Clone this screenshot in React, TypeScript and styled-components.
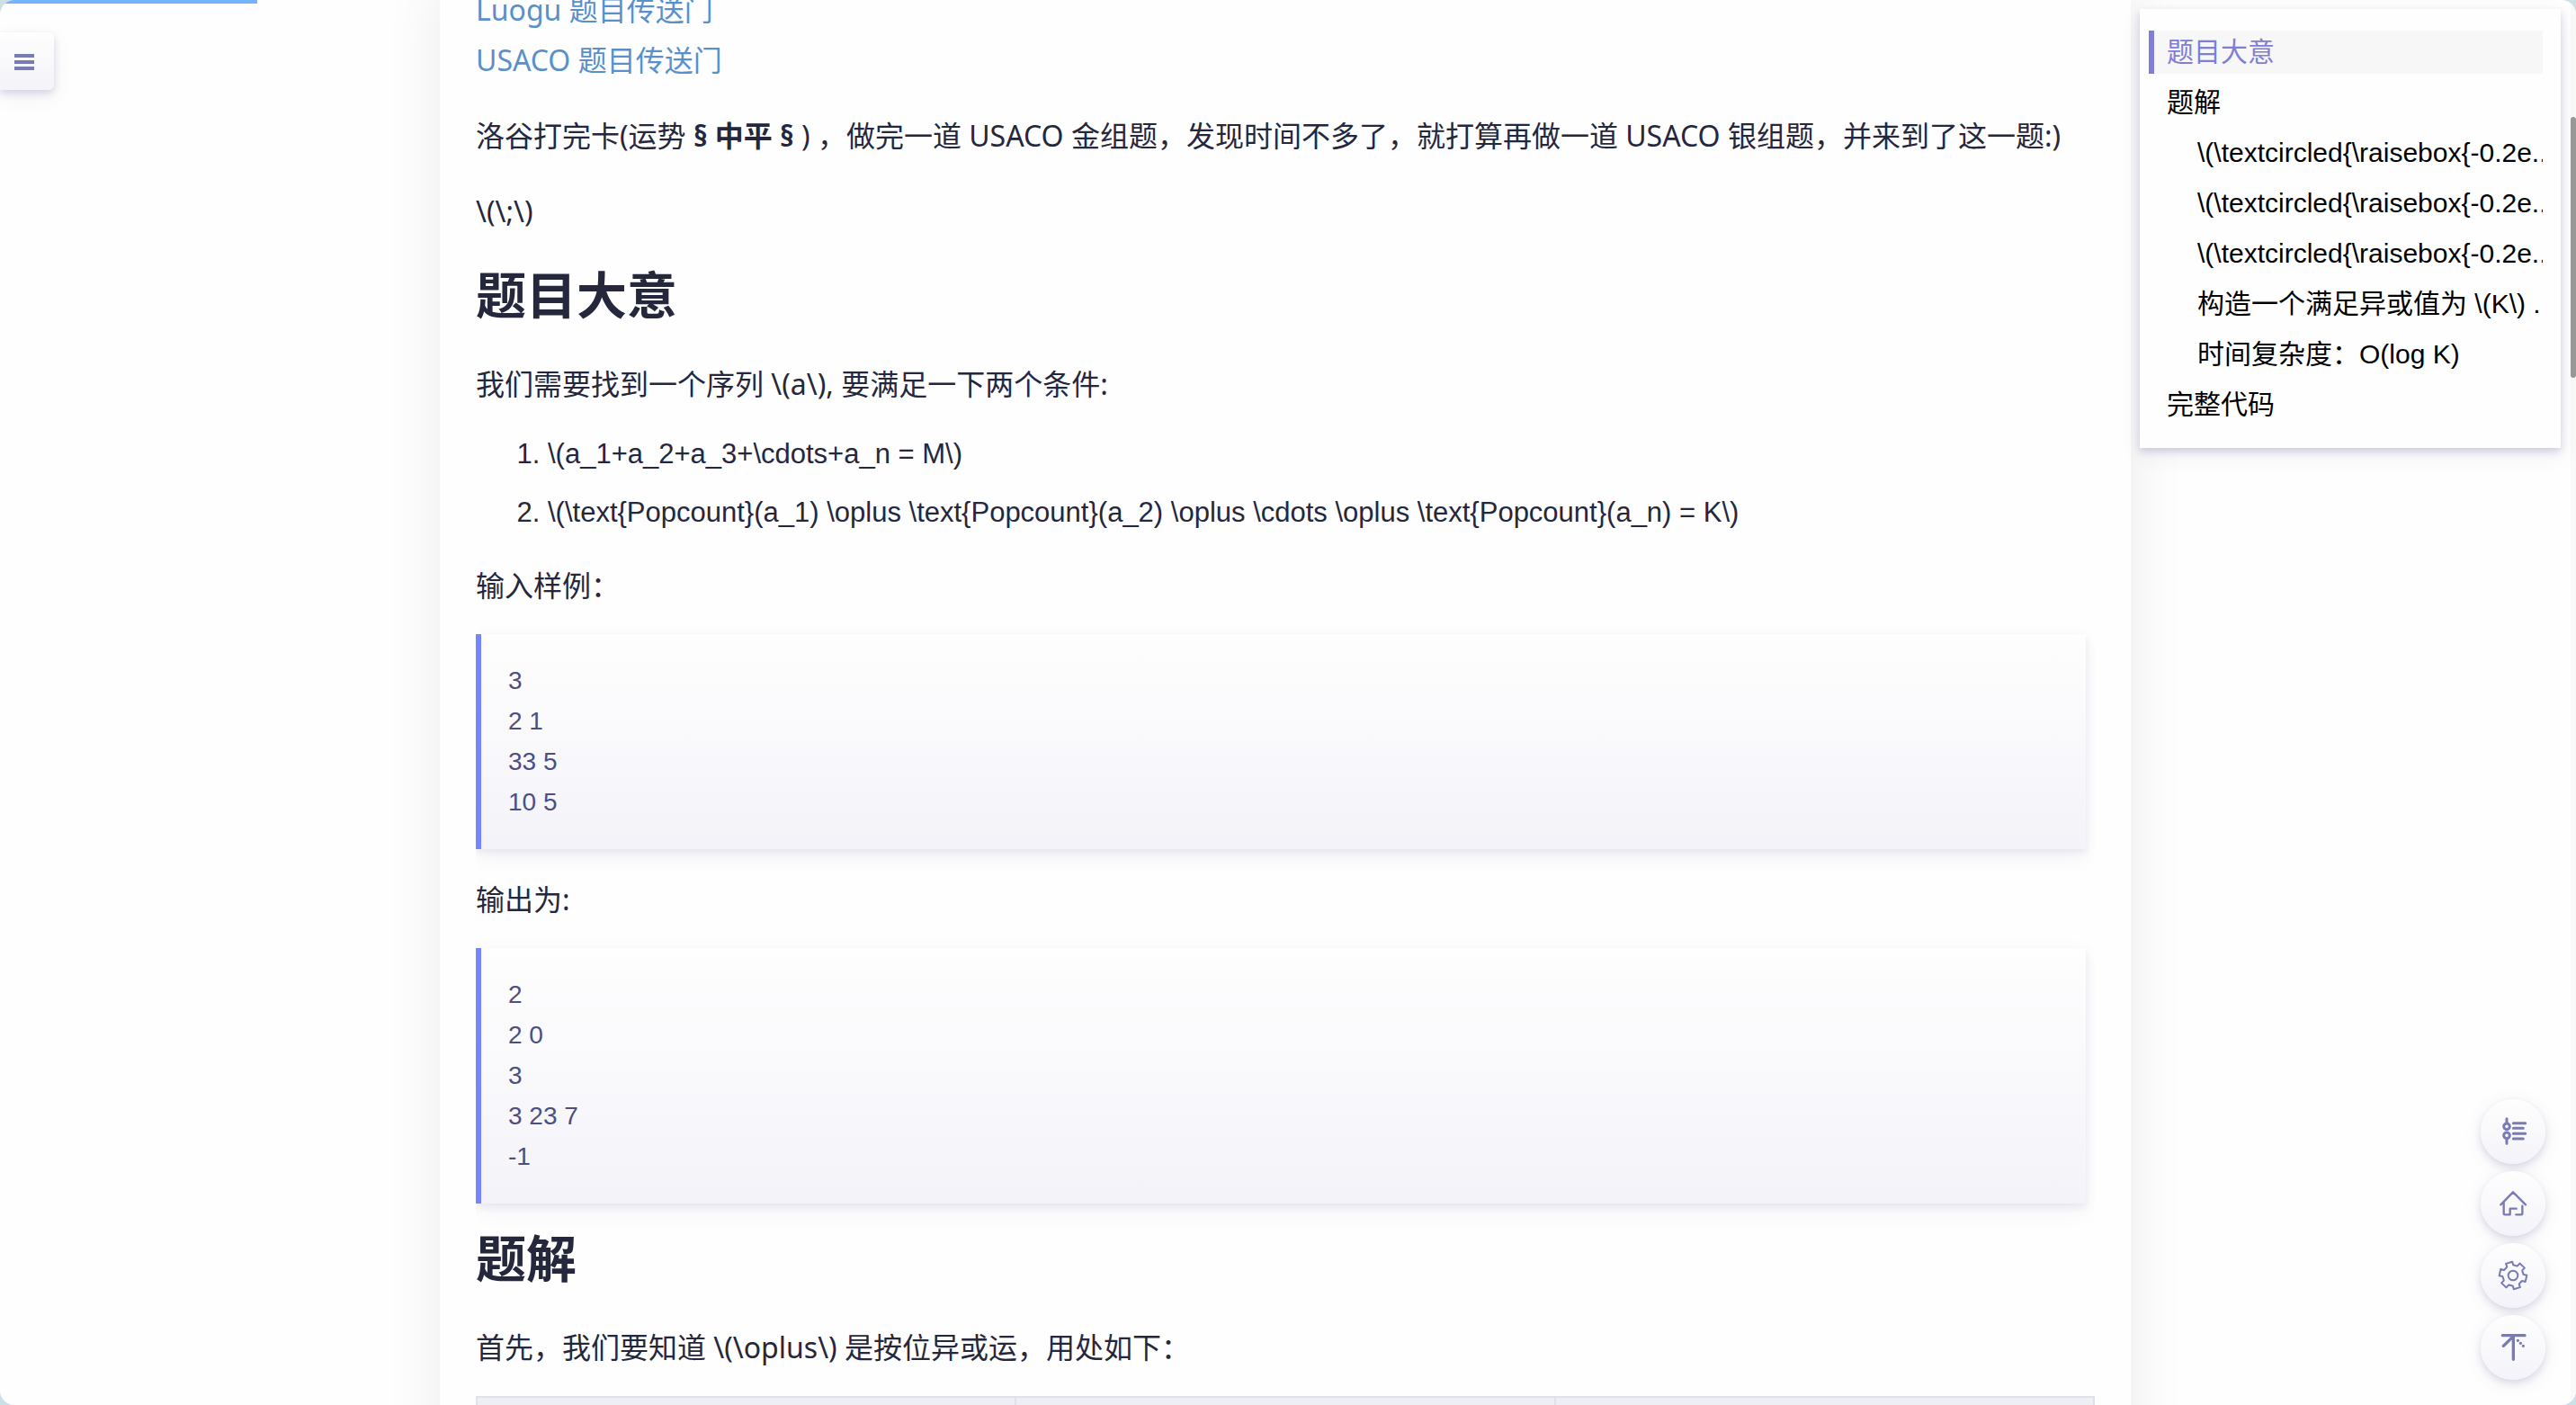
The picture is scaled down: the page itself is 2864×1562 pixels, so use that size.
import React from 'react';
import styled, { createGlobalStyle } from 'styled-components';

const ink = '#25273d';
const accent = '#797bb5';
const sans = '"Liberation Sans", "Noto Sans CJK SC", sans-serif';
const prose = '"Noto Sans", "Noto Sans CJK SC", sans-serif';

const GlobalStyle = createGlobalStyle`
  *, *::before, *::after { box-sizing: border-box; }
  body { margin: 0; background: #cbe1e5; }
`;

const Page = styled.div`
  position: relative;
  display: flex;
  height: 100vh;
  overflow: hidden;
  border-radius: 16px;
  background: #fefefe;
  color: ${ink};
  font-family: ${sans};
`;

const Content = styled.div`
  flex: 1;
  min-width: 0;
`;

const Track = styled.div`
  flex: none;
  width: 6px;
  padding-top: 130px;
  background: #f9f9f9;
`;

const Thumb = styled.div`
  height: 290px;
  border-radius: 3px;
  background: #999;
`;

const Progress = styled.div`
  position: absolute;
  top: 0;
  left: 0;
  width: 10%;
  height: 4px;
  background: #74b4ff;
  z-index: 2;
`;

const MenuButton = styled.button`
  position: absolute;
  top: 36px;
  left: 0;
  display: flex;
  flex-direction: column;
  justify-content: center;
  gap: 3px;
  width: 60px;
  height: 64px;
  padding: 2px 22px 0 16px;
  border: 0;
  border-radius: 0 6px 6px 0;
  background: linear-gradient(#fefefe, #f4f3f9);
  box-shadow: 0 4px 8px rgba(45, 35, 110, 0.16), 0 8px 24px rgba(45, 35, 110, 0.06);
`;

const MenuBar = styled.span`
  height: 4px;
  background: ${accent};
`;

const Main = styled.main`
  max-width: 1880px;
  min-height: 100%;
  margin: 0 auto;
  padding: 0 40px;
  background: #fefefe;
  box-shadow: 0 0 60px rgba(0, 0, 0, 0.08);
`;

const Article = styled.article`
  margin-top: -17px;
  overflow: hidden;
`;

const Paragraph = styled.p`
  margin: 28px 0;
  font: 32px/56px ${prose};

  &:first-child { margin-top: 0; }
`;

const Lead = styled(Paragraph)`
  margin-bottom: 26px;
`;

const Link = styled.a`
  color: #5a90ca;
  text-decoration: none;
`;

const Heading = styled.h1`
  margin: 26px 0 38px;
  font: 700 56px/68px ${prose};

  ${Paragraph} + & { margin-top: 30px; }
`;

const List = styled.ol`
  margin: -11px 0 -7px;
  padding-left: 80px;
  font-size: 31px;
  line-height: 65px;
`;

const Quote = styled.blockquote`
  margin: 0 10px 26px 0;
  padding: 29px 30px 30px;
  border-left: 6px solid #7386ff;
  background: linear-gradient(#fefefe, #f4f3f9);
  box-shadow: 0 4px 8px rgba(45, 35, 110, 0.08), 0 8px 24px rgba(45, 35, 110, 0.05);
  color: #4c4f80;
  font-size: 28px;
  line-height: 45px;
  white-space: pre-line;
`;

const Table = styled.table`
  width: 100%;
  border-collapse: collapse;
  table-layout: fixed;
`;

const HeadCell = styled.th`
  height: 80px;
  border: 2px solid #dfe2ec;
  background: #eeeff5;
`;

const Toc = styled.nav`
  position: absolute;
  top: 10px;
  right: 17px;
  width: 468px;
  padding: 20px 20px 16px 10px;
  background: #fefefe;
  box-shadow: 0 4px 8px rgba(45, 35, 110, 0.18), 0 8px 24px rgba(45, 35, 110, 0.07);
`;

const TocLink = styled.a<{ $active?: boolean; $nested?: boolean }>`
  display: block;
  height: 48px;
  margin: 4px 0 8px;
  padding-left: ${(p) => (p.$nested ? 48 : 14)}px;
  border-left: 6px solid ${(p) => (p.$active ? '#807ed6' : 'transparent')};
  background: ${(p) => (p.$active ? '#f7f7f8' : 'transparent')};
  color: ${(p) => (p.$active ? '#807ed6' : '#000')};
  font-size: 30px;
  line-height: 48px;
  text-decoration: none;
  white-space: nowrap;
  overflow: hidden;
`;

const Tools = styled.div`
  position: absolute;
  right: 34px;
  bottom: 28px;
  display: flex;
  flex-direction: column;
  gap: 8px;
`;

const ToolButton = styled.button`
  width: 72px;
  height: 72px;
  padding: 0;
  border: 0;
  border-radius: 50%;
  background: linear-gradient(#fefefe, #f4f3f9);
  box-shadow: 0 4px 8px rgba(45, 35, 110, 0.14), 0 4px 24px rgba(45, 35, 110, 0.06);
  color: ${accent};
`;

const Glyph = styled.svg`
  display: block;
  width: 100%;
  height: 100%;
  fill: none;
  stroke: currentColor;
  stroke-linecap: round;
  stroke-linejoin: round;
`;

const gearPath = (() => {
  const at = (deg: number, r: number) => {
    const a = (deg * Math.PI) / 180;
    return `${(108 + r * Math.cos(a)).toFixed(1)} ${(108 + r * Math.sin(a)).toFixed(1)}`;
  };
  const parts: string[] = [];
  for (let i = 0; i < 6; i += 1) {
    const mid = -107 + i * 60;
    parts.push(
      `${i ? 'L' : 'M'}${at(mid - 18, 35)}L${at(mid - 14, 46)}L${at(mid + 14, 46)}L${at(mid + 18, 35)}L${at(mid + 30, 34)}`,
    );
  }
  return `${parts.join('')}Z`;
})();

const OutlineIcon = () => (
  <Glyph viewBox="0 0 216 216" strokeWidth={9} aria-hidden="true">
    <circle cx="87" cy="91" r="10" />
    <circle cx="87" cy="121" r="10" />
    <path d="M87 65v15M87 132v16M109 80h40M109 97h33M109 114.500h40M109 132h33" />
  </Glyph>
);

const HomeIcon = () => (
  <Glyph viewBox="0 0 216 216" strokeWidth={7} aria-hidden="true">
    <path d="M67 112 108 70l42 42M77 104v37q0 4 4 4h17v-20h21M139 116v25q0 4-4 4h-17" />
  </Glyph>
);

const GearIcon = () => (
  <Glyph viewBox="0 0 216 216" strokeWidth={6} aria-hidden="true">
    <path d={gearPath} />
    <circle cx="108" cy="108" r="16" />
  </Glyph>
);

const TopIcon = () => (
  <Glyph viewBox="0 0 216 216" strokeWidth={10} aria-hidden="true">
    <path d="M73 68h74M109 70v78M109 71 76 103" />
    <path d="M124 85h.1M133 94h.1M142 103h.1" />
  </Glyph>
);

const circled = '\\(\\textcircled{\\raisebox{-0.2e...';

const toc = [
  { text: '题目大意', active: true },
  { text: '题解' },
  { text: circled, nested: true },
  { text: circled, nested: true },
  { text: circled, nested: true },
  { text: '构造一个满足异或值为 \\(K\\) ...', nested: true },
  { text: '时间复杂度：O(log K)', nested: true },
  { text: '完整代码' },
];

const tools = [
  { label: '目录', Icon: OutlineIcon },
  { label: '首页', Icon: HomeIcon },
  { label: '设置', Icon: GearIcon },
  { label: '返回顶部', Icon: TopIcon },
];

export default function App() {
  return (
    <>
      <GlobalStyle />
      <Page>
        <Progress />
        <Content>
          <Main>
            <Article lang="zh-CN">
              <Paragraph>
                <Link href="#luogu">Luogu 题目传送门</Link>
                <br />
                <Link href="#usaco">USACO 题目传送门</Link>
              </Paragraph>
              <Paragraph>
                洛谷打完卡(运势 <strong>§ 中平 §</strong> ) ，做完一道 USACO 金组题，发现时间不多了，就打算再做一道 USACO
                银组题，并来到了这一题:)
              </Paragraph>
              <Paragraph>{'\\(\\;\\)'}</Paragraph>
              <Heading id="meaning">题目大意</Heading>
              <Paragraph>{'我们需要找到一个序列 \\(a\\), 要满足一下两个条件:'}</Paragraph>
              <List>
                <li>{'\\(a_1+a_2+a_3+\\cdots+a_n = M\\)'}</li>
                <li>
                  {
                    '\\(\\text{Popcount}(a_1) \\oplus \\text{Popcount}(a_2) \\oplus \\cdots \\oplus \\text{Popcount}(a_n) = K\\)'
                  }
                </li>
              </List>
              <Lead>输入样例：</Lead>
              <Quote>{'3\n2 1\n33 5\n10 5'}</Quote>
              <Lead>输出为:</Lead>
              <Quote>{'2\n2 0\n3\n3 23 7\n-1'}</Quote>
              <Heading id="solution">题解</Heading>
              <Lead>{'首先，我们要知道 \\(\\oplus\\) 是按位异或运，用处如下：'}</Lead>
              <Table>
                <thead>
                  <tr>
                    <HeadCell />
                    <HeadCell />
                    <HeadCell />
                  </tr>
                </thead>
              </Table>
            </Article>
          </Main>
        </Content>
        <Track>
          <Thumb />
        </Track>
        <MenuButton type="button" aria-label="菜单">
          <MenuBar />
          <MenuBar />
          <MenuBar />
        </MenuButton>
        <Toc lang="zh-CN">
          {toc.map((item, i) => (
            <TocLink key={i} href="#meaning" $active={item.active} $nested={item.nested}>
              {item.text}
            </TocLink>
          ))}
        </Toc>
        <Tools>
          {tools.map(({ label, Icon }) => (
            <ToolButton key={label} type="button" aria-label={label}>
              <Icon />
            </ToolButton>
          ))}
        </Tools>
      </Page>
    </>
  );
}
